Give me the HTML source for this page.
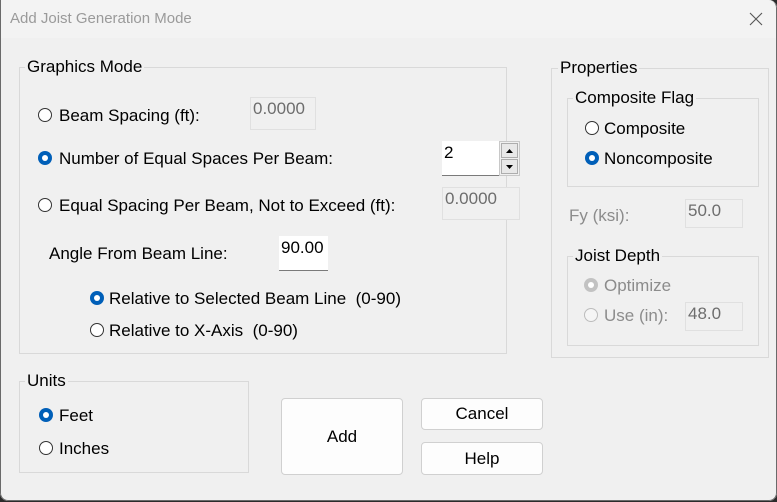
<!DOCTYPE html>
<html><head><meta charset="utf-8"><style>
*{margin:0;padding:0;box-sizing:border-box}
body{width:777px;height:502px;background:#2b2b2b;overflow:hidden;font-family:"Liberation Sans",sans-serif;font-size:17px;color:#000;position:relative}
#win{position:absolute;left:0;top:0;width:777px;height:501px;background:#f0f0f0;border-radius:0 8px 8px 8px;overflow:hidden}
#tb{position:absolute;left:0;top:0;width:777px;height:38px;background:#f3f3f3}
#bd{position:absolute;left:0;top:0;width:777px;height:501px;border:1px solid #6a6a6a;border-top:none;border-radius:0 8px 8px 8px;pointer-events:none}
.a{position:absolute;white-space:nowrap}
.g{position:absolute;border:1px solid #d9d9d9}
.lbl{position:absolute;background:#f0f0f0;padding:0 2px;line-height:18px}
.r{position:absolute;width:14px;height:14px;border-radius:50%;border:1px solid #333;background:#fff}
.r.on{border:none;background:#005fb8}
.r.on::after{content:"";position:absolute;left:4px;top:4px;width:6px;height:6px;border-radius:50%;background:#fff}
.r.dis{border-color:#bcbcbc;background:#f5f5f5}
.r.dison{border:none;background:#c2c2c2}
.r.dison::after{content:"";position:absolute;left:4px;top:4px;width:6px;height:6px;border-radius:50%;background:#fff}
.f{position:absolute;border:1px solid #e0e0e0;background:#f0f0f0;color:#6d6d6d;padding:2px 0 0 2px;line-height:18px}
.w{position:absolute;background:#fff;border-bottom:1px solid #7a7a7a;padding:3px 0 0 2px;line-height:18px}
.btn{position:absolute;background:#fdfdfd;border:1px solid #d0d0d0;border-radius:4px;text-align:center}
.gray{color:#8c8c8c}
</style></head><body>
<div id="win">
<div id="tb"></div>
<div class="a" style="left:10px;top:10px;font-size:15px;color:#9a9a9a">Add Joist Generation Mode</div>
<svg class="a" style="left:749px;top:12px" width="14" height="14"><path d="M1 1L13 13M13 1L1 13" stroke="#555" stroke-width="1.1"/></svg>

<div class="g" style="left:19px;top:67px;width:488px;height:287px"></div>
<div class="lbl" style="left:25px;top:58px">Graphics Mode</div>
<div class="r" style="left:38px;top:108px"></div><div class="a" style="left:59px;top:106px">Beam Spacing (ft):</div>
<div class="f" style="left:250px;top:97px;width:66px;height:33px">0.0000</div>
<div class="r on" style="left:38px;top:151px"></div><div class="a" style="left:59px;top:149px">Number of Equal Spaces Per Beam:</div>
<div class="w" style="left:442px;top:141px;width:57px;height:35px">2</div>
<div class="a" style="left:499px;top:141px;width:21px;height:35px;border:1px solid #c8c8c8;background:#f0f0f0"></div>
<div class="a" style="left:501px;top:143px;width:17px;height:15px;border:1px solid #adadad;background:#e8e8e8"></div>
<div class="a" style="left:501px;top:159px;width:17px;height:15px;border:1px solid #adadad;background:#e8e8e8"></div>
<svg class="a" style="left:505px;top:147px" width="9" height="24"><path d="M1 6L4.5 2L8 6Z M1 18L4.5 22L8 18Z" fill="#000"/></svg>
<div class="r" style="left:38px;top:198px"></div><div class="a" style="left:59px;top:196px">Equal Spacing Per Beam, Not to Exceed (ft):</div>
<div class="f" style="left:442px;top:187px;width:78px;height:33px">0.0000</div>
<div class="a" style="left:49px;top:244px">Angle From Beam Line:</div>
<div class="w" style="left:279px;top:236px;width:49px;height:35px">90.00</div>
<div class="r on" style="left:90px;top:291px"></div><div class="a" style="left:109px;top:289px">Relative to Selected Beam Line&nbsp; (0-90)</div>
<div class="r" style="left:90px;top:323px"></div><div class="a" style="left:109px;top:321px">Relative to X-Axis&nbsp; (0-90)</div>

<div class="g" style="left:19px;top:381px;width:230px;height:92px"></div>
<div class="lbl" style="left:25px;top:372px">Units</div>
<div class="r on" style="left:39px;top:408px"></div><div class="a" style="left:59px;top:406px">Feet</div>
<div class="r" style="left:39px;top:441px"></div><div class="a" style="left:59px;top:439px">Inches</div>

<div class="btn" style="left:281px;top:398px;width:122px;height:77px;line-height:75px">Add</div>
<div class="btn" style="left:421px;top:398px;width:122px;height:32px;line-height:30px">Cancel</div>
<div class="btn" style="left:421px;top:442px;width:122px;height:33px;line-height:32px">Help</div>

<div class="g" style="left:551px;top:68px;width:218px;height:290px"></div>
<div class="lbl" style="left:558px;top:59px">Properties</div>
<div class="g" style="left:567px;top:98px;width:192px;height:89px"></div>
<div class="lbl" style="left:573px;top:89px">Composite Flag</div>
<div class="r" style="left:585px;top:121px"></div><div class="a" style="left:604px;top:119px">Composite</div>
<div class="r on" style="left:585px;top:151px"></div><div class="a" style="left:604px;top:149px">Noncomposite</div>
<div class="a gray" style="left:569px;top:206px">Fy (ksi):</div>
<div class="f" style="left:685px;top:199px;width:58px;height:29px">50.0</div>
<div class="g" style="left:567px;top:256px;width:192px;height:90px"></div>
<div class="lbl" style="left:573px;top:247px">Joist Depth</div>
<div class="r dison" style="left:584px;top:278px"></div><div class="a gray" style="left:604px;top:276px">Optimize</div>
<div class="r dis" style="left:584px;top:308px"></div><div class="a gray" style="left:604px;top:306px">Use (in):</div>
<div class="f" style="left:685px;top:302px;width:58px;height:29px">48.0</div>
<div id="bd"></div>
</div>
</body></html>
